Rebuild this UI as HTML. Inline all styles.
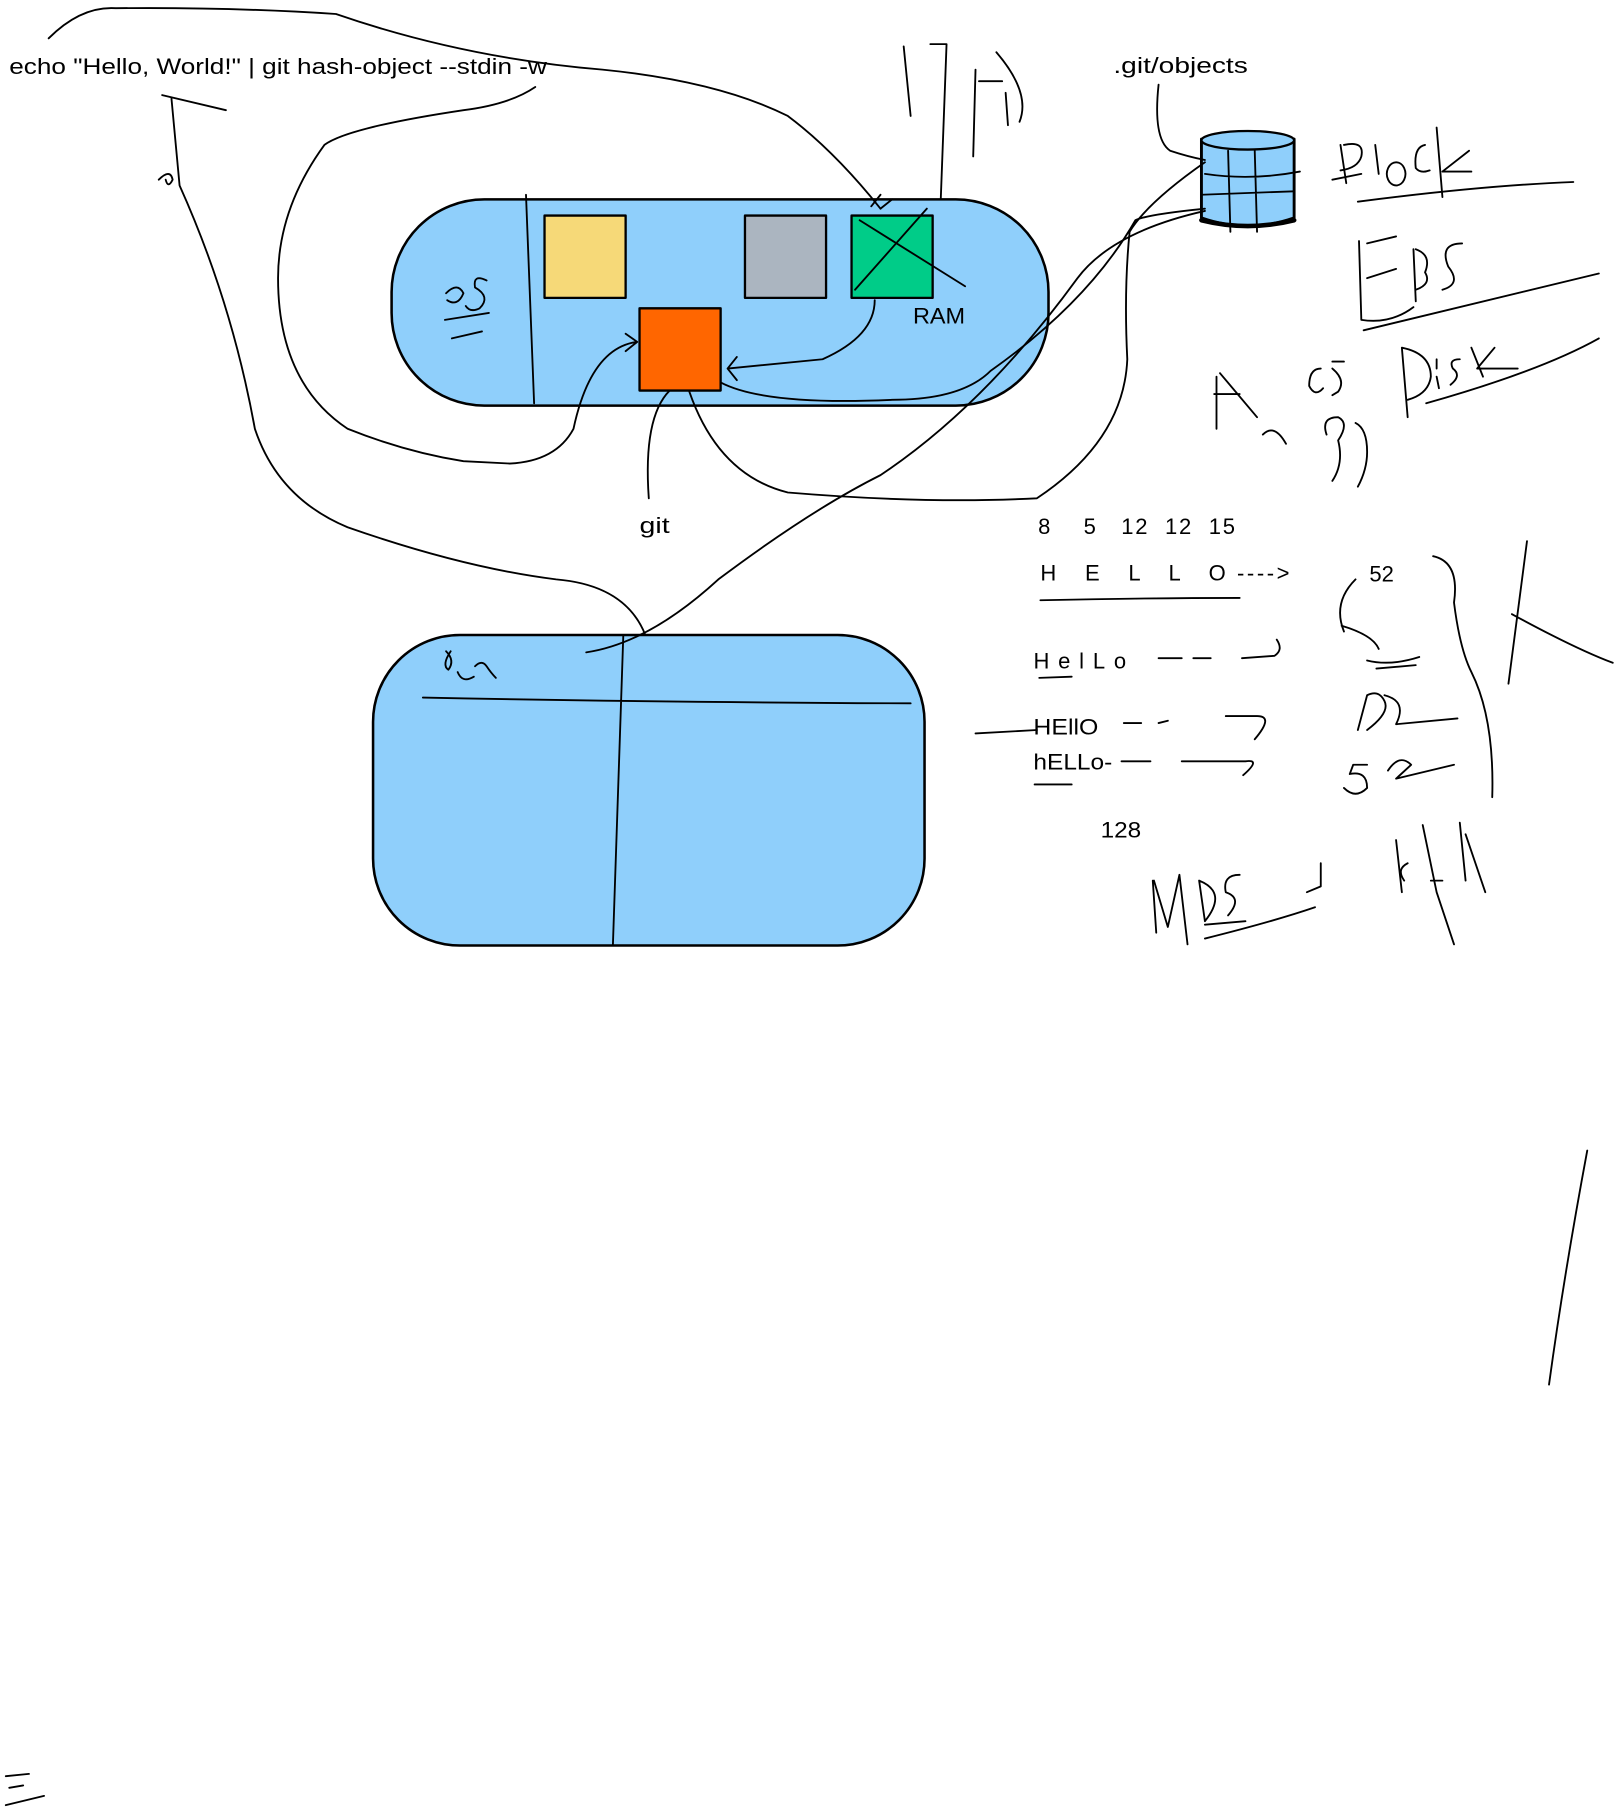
<!DOCTYPE html>
<html><head><meta charset="utf-8"><style>
html,body{margin:0;padding:0;background:#fff;width:1622px;height:1818px;overflow:hidden}
svg{display:block}
text{font-family:"Liberation Sans",sans-serif;fill:#000}
</style></head><body>
<svg width="1622" height="1818" viewBox="0 0 1400 1569" xmlns="http://www.w3.org/2000/svg">
<g fill="none" stroke="#000" stroke-width="1.6" stroke-linecap="round" stroke-linejoin="round">
<rect x="338" y="172" width="567" height="178" rx="80" fill="#8fcffb" stroke-width="2.2"/>
<rect x="470" y="186" width="70" height="71" fill="#f6d978" stroke-width="2"/>
<rect x="643" y="186" width="70" height="71" fill="#abb5c0" stroke-width="2"/>
<rect x="735" y="186" width="70" height="71" fill="#00cc88" stroke-width="2"/>
<path d="M738 250 L800 180 M742 190 L833 247"/>
<rect x="552" y="266" width="70" height="71" fill="#ff6600" stroke-width="2"/>
<path d="M454 168 L461 348"/>
<path d="M385 253 q10 -10 15 0 q-5 12 -14 6 M420 242 q-12 -6 -10 6 q14 8 4 18 q-8 4 -12 -2 M384 276 l38 -6 M390 292 l26 -6"/>
<rect x="322" y="548" width="476" height="268" rx="75" fill="#8fcffb" stroke-width="2.2"/>
<path d="M538 548 L529 816 M365 602 Q560 606 786 607"/>
<path d="M385 562 q8 8 2 16 q-6 -4 2 -16 M395 580 q4 10 14 4 M410 575 q6 -6 10 0 q4 6 8 10"/>
<path d="M1037 120 L1037 188 Q1077 202 1117 188 L1117 120" fill="#8fcffb" stroke-width="2.5"/>
<ellipse cx="1077" cy="121" rx="40" ry="8" fill="#8fcffb" stroke-width="2"/>
<path d="M1037 190 Q1077 200 1117 190" stroke-width="4"/>
<path d="M1060 130 L1062 200 M1083 130 L1085 200 M1037 168 L1117 165 M1040 150 Q1080 156 1122 148"/>
<path d="M42 33 Q70 5 100 7 Q200 6 290 12 Q400 50 520 60 Q620 70 680 100 Q720 130 760 180"/>
<path d="M752 178 l8 -10 M760 180 l10 -8"/>
<path d="M462 75 Q440 90 400 95 Q300 110 280 125 Q240 180 240 240 Q240 330 300 370 Q350 390 400 398 L440 400 Q480 398 495 370 Q510 300 550 295 M540 288 l10 7 -10 8"/>
<path d="M140 82 L195 95 M148 85 L155 160 Q200 260 220 370 Q240 430 300 455 Q400 490 480 500 Q540 505 557 548"/>
<path d="M137 155 q10 -10 12 0 q-4 8 -6 0"/>
<path d="M755 259 Q755 290 710 310 L628 318 M636 308 l-8 10 8 10"/>
<path d="M622 330 Q660 350 770 345 Q830 345 855 320 Q940 260 980 190 Q990 185 1040 180"/>
<path d="M578 337 Q555 360 560 430"/>
<path d="M595 338 Q620 410 680 425 Q800 435 895 430 Q970 380 973 310 Q970 250 975 200 Q990 175 1040 140"/>
<path d="M506 563 Q560 555 620 500 Q700 440 760 410 Q850 350 930 240 Q960 200 1040 182"/>
<path d="M1000 73 Q995 120 1010 130 Q1025 135 1040 138"/>
<path d="M780 40 L786 100 M803 38 L817 38 L812 172 M842 60 L840 135 M845 70 L865 70 M860 45 Q890 80 880 105 M868 80 L870 108"/>
<path d="M1157 125 L1162 158 M1160 125 q18 -4 15 10 q-3 10 -18 12 M1150 155 L1175 150 M1187 125 L1190 150 M1205 140 a8 10 0 1 0 0.1 0 M1230 125 q-10 2 -8 20 q4 5 12 2 M1240 110 L1245 170 M1245 148 L1268 130 M1245 148 L1270 148"/>
<path d="M1172 174 Q1280 160 1358 157"/>
<path d="M1173 208 L1175 276 Q1200 280 1220 265 M1180 240 L1205 232 M1180 210 L1205 204 M1220 215 L1222 260 M1222 215 q14 5 8 20 q6 10 -8 15 M1262 210 q-20 0 -12 20 q12 15 -5 20"/>
<path d="M1177 285 Q1260 265 1380 236"/>
<path d="M1210 300 L1215 360 M1210 300 q25 5 25 25 q-2 15 -20 20 M1240 310 L1240 318 M1240 325 L1242 335 M1260 310 q-10 0 -6 8 q8 6 -2 14 M1270 300 L1280 325 M1275 318 L1290 300 M1275 318 L1310 318"/>
<path d="M1231 348 Q1330 320 1380 292"/>
<path d="M1050 325 L1050 370 M1053 322 L1085 360 M1048 340 L1070 340 M1090 375 q10 -10 20 8"/>
<path d="M1140 318 q-10 0 -10 15 q5 10 12 2 M1150 312 l10 0 M1150 318 q12 10 5 20 l-5 3 M1145 375 q-5 -15 10 -15 q10 5 0 20 q5 20 -5 35 M1170 365 q10 5 10 25 q0 15 -8 30"/>
<path d="M1170 500 Q1150 520 1160 545 M1158 540 Q1185 548 1190 560 M1180 570 Q1200 575 1225 567 M1188 577 L1222 574"/>
<path d="M1237 480 Q1260 485 1255 520 Q1260 560 1270 580 Q1290 620 1288 688 M1318 467 L1302 590 M1305 530 Q1360 560 1392 572"/>
<path d="M1172 630 L1180 600 q10 -5 15 5 q5 10 -15 25 M1195 600 q20 5 10 25 L1258 620"/>
<path d="M1160 680 q10 10 20 0 q0 -15 -15 -12 L1168 660 L1180 660 M1198 665 q10 -15 20 -5 L1205 672 L1255 660"/>
<path d="M898 518 Q990 516 1070 516"/>
<path d="M1000 568 L1020 568 M1030 568 L1045 568 M1072 568 L1100 566 q8 -5 2 -14"/>
<path d="M970 624 L985 624 M1000 624 L1008 622 M1058 618 L1085 618 q15 0 -2 20"/>
<path d="M842 633 L895 630 M968 657 L993 657 M1020 657 L1075 657 q14 -2 -2 12"/>
<path d="M897 585 L925 584 M893 677 L925 677"/>
<path d="M995 760 L998 805 M996 760 L1008 800 L1018 755 L1025 815 M1035 760 L1040 795 M1035 760 q25 10 5 35 M1070 755 q-15 0 -12 15 q15 5 2 20 M1040 798 L1075 795 M1040 810 Q1100 795 1135 783 M1128 770 L1140 765 L1140 745"/>
<path d="M1205 725 L1210 770 M1215 745 q-10 5 -3 15 M1228 712 L1240 770 L1255 815 M1235 760 L1245 760 M1260 710 L1265 760 M1265 720 L1282 770"/>
<path d="M1370 993 Q1350 1100 1337 1195"/>
<path d="M5 1533 L25 1531 M8 1543 L20 1541 M5 1558 L38 1550"/>
</g>
<g font-size="19">
<text x="8" y="64" textLength="464" lengthAdjust="spacingAndGlyphs">echo "Hello, World!" | git hash-object --stdin -w</text>
<text x="961" y="63" textLength="116" lengthAdjust="spacingAndGlyphs">.git/objects</text>
<text x="788" y="279" textLength="45" lengthAdjust="spacingAndGlyphs">RAM</text>
<text x="552" y="460" textLength="26" lengthAdjust="spacingAndGlyphs">git</text>
<text x="896" y="461" textLength="170" lengthAdjust="spacing">8 &#160;&#160;&#160;5 &#160;&#160;12 &#160;12 &#160;15</text>
<text x="898" y="501" textLength="215" lengthAdjust="spacing">H &#160;&#160;E &#160;&#160;L &#160;&#160;L &#160;&#160;O ----&gt;</text>
<text x="1182" y="502">52</text>
<text x="892" y="577" textLength="80" lengthAdjust="spacing">HelLo</text>
<text x="892" y="634" textLength="56" lengthAdjust="spacingAndGlyphs">HEllO</text>
<text x="892" y="664" textLength="68" lengthAdjust="spacingAndGlyphs">hELLo-</text>
<text x="950" y="723" textLength="35" lengthAdjust="spacingAndGlyphs">128</text>
</g>
</svg>
</body></html>
